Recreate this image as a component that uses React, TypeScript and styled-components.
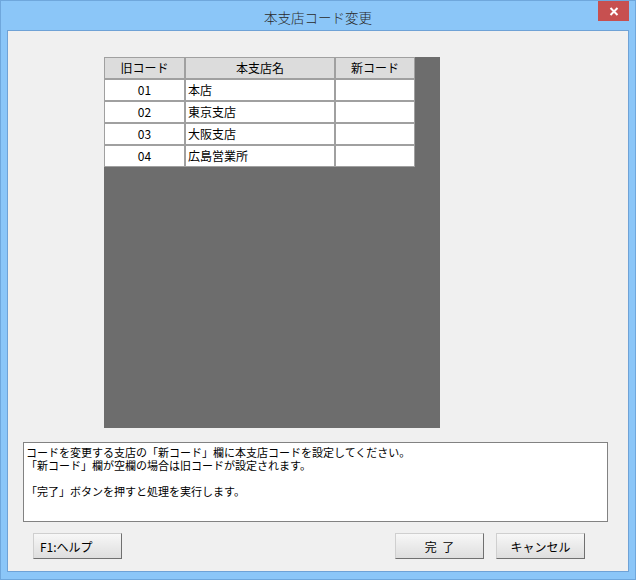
import React from 'react'
import styled, { createGlobalStyle } from 'styled-components'

const GlobalStyle = createGlobalStyle`
  html, body {
    margin: 0;
    padding: 0;
    background: #ffffff;
  }
  body {
    font-family: "Noto Sans CJK JP", "Noto Sans", sans-serif;
  }
`

const Window = styled.div`
  box-sizing: border-box;
  width: 636px;
  height: 580px;
  background: #8bc6f8;
  border: 1px solid #6fa7dc;
  padding: 0 6px 7px 6px;
  display: flex;
  flex-direction: column;
  position: relative;
`

const TitleBar = styled.div`
  height: 29px;
  display: flex;
  align-items: center;
  justify-content: center;
  font-size: 13.5px;
  font-weight: 300;
  color: #2a2a2a;
  padding-top: 2px;
  box-sizing: border-box;
`

const CloseButton = styled.div`
  position: absolute;
  top: 0;
  right: 6px;
  width: 31px;
  height: 20px;
  background: #c75050;
  display: flex;
  align-items: center;
  justify-content: center;
`

const Client = styled.div`
  flex: 1;
  box-sizing: border-box;
  background: #f0f0f0;
  border: 1px solid #6fa2d6;
  display: flex;
  flex-direction: column;
`

const GridPanel = styled.div`
  margin: 26px 0 0 96px;
  width: 336px;
  height: 371px;
  background: #6d6d6d;
`

const Table = styled.div`
  width: 311px;
  display: flex;
  flex-direction: column;
`

const Row = styled.div`
  display: grid;
  grid-template-columns: 81px 150px 80px;
`

const Cell = styled.div<{ $head?: boolean; $align?: 'left' | 'center' }>`
  box-sizing: border-box;
  height: 22px;
  border: 1px solid #a0a0a0;
  background: ${p => (p.$head ? '#dcdcdc' : '#ffffff')};
  font-size: 12px;
  line-height: 20px;
  color: #000;
  text-align: ${p => p.$align ?? 'center'};
  padding: ${p => (p.$align === 'left' ? '0 2px' : '0')};
  white-space: nowrap;
  overflow: hidden;
`

const MessageBox = styled.div`
  margin: 14px 0 0 15px;
  width: 585px;
  height: 80px;
  box-sizing: border-box;
  background: #ffffff;
  border: 1px solid #828282;
  padding: 3px 2px;
  font-size: 11px;
  line-height: 13px;
  color: #000;
`

const MessageLine = styled.div`
  min-height: 13px;
  white-space: nowrap;
`

const ButtonRow = styled.div`
  margin-top: 11px;
  padding: 0 43px 0 25px;
  display: flex;
  align-items: center;
  justify-content: space-between;
`

const ButtonGroup = styled.div`
  display: flex;
  gap: 12px;
`

const Button = styled.button<{ $left?: boolean }>`
  box-sizing: border-box;
  width: 89px;
  height: 26px;
  margin: 0;
  padding: ${p => (p.$left ? '0 0 0 6px' : '0')};
  text-align: ${p => (p.$left ? 'left' : 'center')};
  font-family: "Noto Sans CJK JP", "Noto Sans", sans-serif;
  font-size: 12px;
  color: #000;
  background: linear-gradient(#f7f7f7, #dedede);
  border-style: solid;
  border-width: 1px;
  border-color: #cfcfcf #707070 #707070 #cfcfcf;
  border-radius: 0;
  word-spacing: 3px;
`

const rows = [
  { code: '01', name: '本店' },
  { code: '02', name: '東京支店' },
  { code: '03', name: '大阪支店' },
  { code: '04', name: '広島営業所' },
]

export default function App() {
  return (
    <>
      <GlobalStyle />
      <Window>
        <TitleBar>本支店コード変更</TitleBar>
        <CloseButton>
          <svg width="10" height="9" viewBox="0 0 10 9">
            <path d="M1.5 1 L8.5 8 M8.5 1 L1.5 8" stroke="#ffffff" strokeWidth="2" />
          </svg>
        </CloseButton>
        <Client>
          <GridPanel>
            <Table>
              <Row>
                <Cell $head>旧コード</Cell>
                <Cell $head>本支店名</Cell>
                <Cell $head>新コード</Cell>
              </Row>
              {rows.map(r => (
                <Row key={r.code}>
                  <Cell>{r.code}</Cell>
                  <Cell $align="left">{r.name}</Cell>
                  <Cell />
                </Row>
              ))}
            </Table>
          </GridPanel>
          <MessageBox>
            <MessageLine>コードを変更する支店の「新コード」欄に本支店コードを設定してください。</MessageLine>
            <MessageLine>「新コード」欄が空欄の場合は旧コードが設定されます。</MessageLine>
            <MessageLine />
            <MessageLine>「完了」ボタンを押すと処理を実行します。</MessageLine>
          </MessageBox>
          <ButtonRow>
            <Button $left>F1:ヘルプ</Button>
            <ButtonGroup>
              <Button>完 了</Button>
              <Button>キャンセル</Button>
            </ButtonGroup>
          </ButtonRow>
        </Client>
      </Window>
    </>
  )
}
